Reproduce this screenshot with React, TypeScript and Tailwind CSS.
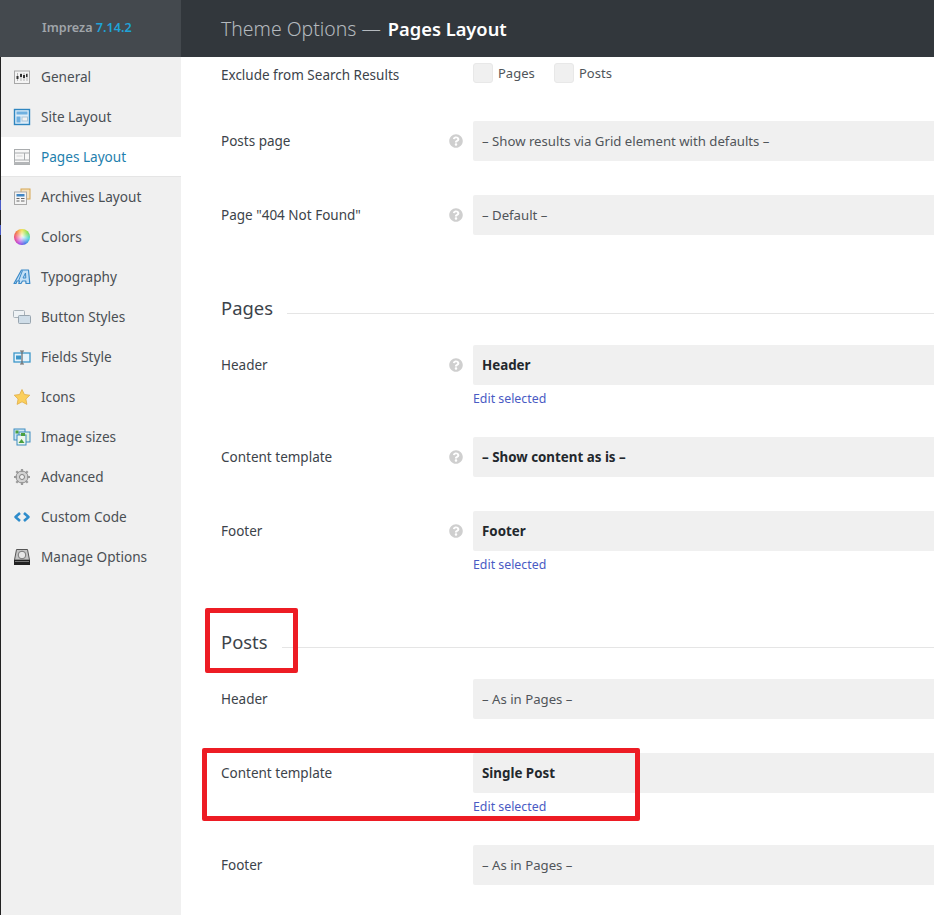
import React from "react";
import { FaQuestionCircle } from "react-icons/fa";

const G = ({ children }: { children: React.ReactNode }) => (
  <svg width="18" height="18" viewBox="0 0 18 18" className="shrink-0">{children}</svg>
);

const icons: Record<string, React.ReactNode> = {
  General: (
    <G>
      <rect x="1.5" y="3" width="15" height="12.500" fill="#f4f4f4" stroke="#a8a8a8" />
      <path d="M4.500 5v8M8 5v8M11 5v8M14 5v8" stroke="#b5b5b5" />
      <path d="M3.500 8h2v3h-2zM7 6h2v3H7zM10 7h2v3h-2zM13 6h1.500v3H13z" fill="#333" />
    </G>
  ),
  "Site Layout": (
    <G>
      <rect x="1.500" y="1.500" width="15" height="15" fill="#dcecf8" stroke="#2f86c0" strokeWidth="1.400" />
      <rect x="3.500" y="3.500" width="11" height="3" fill="#6fb0e0" />
      <rect x="3.500" y="8.500" width="4" height="6" fill="#6fb0e0" />
      <rect x="9" y="9" width="5.500" height="4" fill="#f2f2f2" stroke="#a9c4d8" />
    </G>
  ),
  "Pages Layout": (
    <G>
      <rect x="1.500" y="1.500" width="15" height="15" fill="#f7f7f7" stroke="#a9acae" />
      <path d="M1.500 5h15M11.500 5v7M1.500 12h15" stroke="#a9acae" />
      <path d="M3.500 8h6" stroke="#d4d4d4" />
      <rect x="1" y="14" width="16" height="2.500" fill="#b4b6b8" />
    </G>
  ),
  "Archives Layout": (
    <G>
      <rect x="8" y="1" width="9" height="10" fill="#f4e2bf" stroke="#d6a552" />
      <rect x="1.500" y="4" width="12" height="12.500" fill="#f4f4f4" stroke="#a9a9a9" />
      <rect x="3.500" y="6" width="8" height="2.500" fill="#3f86c4" />
      <path d="M3.500 10.500h3M8 10.500h3.500M3.500 13h3M8 13h3.500" stroke="#666" />
    </G>
  ),
  Typography: (
    <G>
      <path d="M1 15.500L8.500 2H15.500L16.800 15.500H13L12.800 13H9.500L8 15.500H5.800L6.500 13H4L3 15.500z" fill="#c4e0f6" stroke="#3b8ac8" strokeWidth="1.200" strokeLinejoin="round" />
      <path d="M9.500 2.500L5.500 13M12.500 5l-2.500 5h2.800z" fill="none" stroke="#3b8ac8" />
    </G>
  ),
  "Button Styles": (
    <G>
      <rect x="0.500" y="2.500" width="11" height="7" rx="1" fill="#eef2f5" stroke="#a9b2b9" />
      <rect x="5.500" y="7.500" width="12" height="8" rx="1" fill="#cfdde8" stroke="#98a5af" />
    </G>
  ),
  "Fields Style": (
    <G>
      <rect x="1" y="5" width="16" height="9" fill="#e6f3fb" stroke="#3d97c9" strokeWidth="1.300" />
      <rect x="3" y="7.500" width="5" height="4" fill="#3d97c9" />
      <path d="M9 3v13M7 3h4M7 16h4" stroke="#666" strokeWidth="1.200" />
    </G>
  ),
  Icons: (
    <G>
      <path d="M9 1.500l2.400 5 5.400.7-3.900 3.800 1 5.400L9 13.800l-4.900 2.600 1-5.400L1.200 7.200l5.400-.7z" fill="#fbcf5c" stroke="#e0ac45" strokeWidth="0.800" strokeLinejoin="round" />
    </G>
  ),
  "Image sizes": (
    <G>
      <rect x="1" y="1" width="11" height="11" fill="#cfe6f5" stroke="#3d8cc0" />
      <rect x="6" y="4" width="11" height="10" fill="#dff0e0" stroke="#3d8cc0" />
      <rect x="4" y="7" width="9" height="10" fill="#eef7ee" stroke="#3d8cc0" />
      <path d="M5.500 15l3-4 3 4z" fill="#4aa03f" />
      <rect x="2.500" y="2.500" width="3" height="3" fill="#4aa03f" />
      <rect x="8" y="5" width="4" height="3" fill="#4aa03f" />
    </G>
  ),
  Advanced: (
    <G>
      <circle cx="9" cy="9" r="6" fill="#d2d2d2" stroke="#8e8e8e" strokeWidth="1" />
      <path d="M9 1v3M9 14v3M1 9h3M14 9h3M3.300 3.300l2 2M12.700 12.700l2 2M14.700 3.300l-2 2M5.300 12.700l-2 2" stroke="#9a9a9a" strokeWidth="2.200" />
      <circle cx="9" cy="9" r="2.500" fill="#f0f0f0" stroke="#808080" />
    </G>
  ),
  "Custom Code": (
    <G>
      <path d="M7 5L2.500 9 7 13" fill="none" stroke="#2e8ccb" strokeWidth="2.600" strokeLinejoin="round" />
      <path d="M11 5l4.500 4L11 13" fill="none" stroke="#2e8ccb" strokeWidth="2.600" strokeLinejoin="round" />
    </G>
  ),
  "Manage Options": (
    <G>
      <path d="M3.500 1.500h11L16.500 12h-15z" fill="#c4c4c4" stroke="#555" />
      <circle cx="9" cy="7" r="3.800" fill="#e6e6e6" stroke="#777" />
      <rect x="1" y="12" width="16" height="5" fill="#222" />
      <rect x="2" y="13" width="14" height="1" fill="#777" />
    </G>
  ),
};

const menu = [
  "General",
  "Site Layout",
  "Pages Layout",
  "Archives Layout",
  "Colors",
  "Typography",
  "Button Styles",
  "Fields Style",
  "Icons",
  "Image sizes",
  "Advanced",
  "Custom Code",
  "Manage Options",
];

function MenuItem({ name }: { name: string }) {
  const active = name === "Pages Layout";
  return (
    <div
      className={
        active
          ? "flex h-10 items-center gap-[10px] border-b border-[#e5e5e5] bg-white pt-px pl-3 text-[13.6px] text-[#1f7fae]"
          : "flex h-10 items-center gap-[10px] pl-3 text-[13.6px] text-[#4a4f54]"
      }
    >
      {name === "Colors" ? (
        <span className="mx-px h-4 w-4 shrink-0 rounded-full bg-[radial-gradient(circle,#ffffffcc_10%,transparent_70%),conic-gradient(#f2e04a,#7bdc4a,#3fd0d8,#3f6ee8,#b03fe0,#e83f8a,#f0703a,#f2e04a)]" />
      ) : (
        icons[name]
      )}
      <span>{name}</span>
    </div>
  );
}

function Help() {
  return (
    <span className="flex w-[14px] shrink-0 justify-center text-[#cfcfcf]">
      <FaQuestionCircle size={14} />
    </span>
  );
}

function Field({
  label,
  value,
  bold,
  help,
  edit,
}: {
  label: string;
  value: string;
  bold?: boolean;
  help?: boolean;
  edit?: boolean;
}) {
  return (
    <div className="flex">
      <div className="flex h-10 w-[252px] shrink-0 items-center pr-[10px] text-[13.5px] text-[#3c434a]">
        <span className="flex-1">{label}</span>
        {help && <Help />}
      </div>
      <div className="min-w-0 flex-1">
        <div
          className={
            bold
              ? "flex h-10 items-center rounded-l-[2px] bg-[#f0f0f0] pl-[9px] text-[13.35px] font-bold text-[#23282d]"
              : "flex h-10 items-center rounded-l-[2px] bg-[#f0f0f0] pl-[9px] pt-px text-[13.2px] text-[#50555a]"
          }
        >
          {value}
        </div>
        {edit && <div className="h-[18px] text-[12.35px] leading-[28px] text-[#4a5bc4]">Edit selected</div>}
      </div>
    </div>
  );
}

function Heading({ title }: { title: string }) {
  return (
    <div className="h-[110px] pt-[61px]">
      <div className="flex h-6 items-center gap-[14px]">
        <span className="text-[18.4px] leading-6 text-[#3c434a]">{title}</span>
        <span className="mt-[10px] h-px flex-1 bg-[#e5e5e5]" />
      </div>
    </div>
  );
}

export default function App() {
  return (
    <div className="relative flex h-[915px] w-[934px] flex-col overflow-hidden bg-white font-['Noto_Sans','Open_Sans',sans-serif]">
      <header className="flex h-[57px] shrink-0 bg-[#32373c]">
        <div className="flex w-[181px] items-center bg-[#44494e] pb-px pl-[42px] text-[12.6px] font-semibold text-[#a0a5aa]">
          <span>
            Impreza <span className="text-[#1fa3d8]">7.14.2</span>
          </span>
        </div>
        <div className="flex items-center pl-10 text-[19.4px] font-light text-[#b4b9be]">
          Theme Options —&nbsp;<span className="ml-[2px] text-[18.3px] font-semibold text-white">Pages Layout</span>
        </div>
      </header>
      <div className="flex min-h-0 flex-1">
        <aside className="relative w-[181px] shrink-0 border-l border-[#222] bg-[#f0f0f0]">
          {menu.map((m) => (
            <MenuItem key={m} name={m} />
          ))}
          <span className="absolute -left-px top-[143px] h-[10px] w-px bg-[#4a5bc4]" />
          <span className="absolute -left-px top-[168px] h-[10px] w-px bg-[#4a5bc4]" />
        </aside>
        <main className="flex min-w-0 flex-1 flex-col pl-10">
          <div className="flex h-16 shrink-0">
            <div className="w-[252px] shrink-0 pt-2 text-[13.5px] leading-5 text-[#3c434a]">
              Exclude from Search Results
            </div>
            <div className="mt-[6px] flex h-5 items-center text-[13px] text-[#50555a]">
              <span className="h-5 w-5 rounded-[3px] border border-[#e8e8e8] bg-[#f0f0f0]" />
              <span className="ml-[5px] w-[56px] pt-px">Pages</span>
              <span className="h-5 w-5 rounded-[3px] border border-[#e8e8e8] bg-[#f0f0f0]" />
              <span className="ml-[5px] pt-px">Posts</span>
            </div>
          </div>
          <div className="flex flex-col gap-[34px]">
            <Field label="Posts page" value="– Show results via Grid element with defaults –" help />
            <Field label={'Page "404 Not Found"'} value="– Default –" help />
          </div>
          <Heading title="Pages" />
          <div className="flex flex-col gap-[34px]">
            <Field label="Header" value="Header" bold help edit />
            <Field label="Content template" value="– Show content as is –" bold help />
            <Field label="Footer" value="Footer" bold help edit />
          </div>
          <Heading title="Posts" />
          <div className="flex flex-col gap-[34px]">
            <Field label="Header" value="– As in Pages –" />
            <Field label="Content template" value="Single Post" bold edit />
            <Field label="Footer" value="– As in Pages –" />
          </div>
        </main>
      </div>
      <div className="absolute left-[205px] top-[608px] h-[65px] w-[93px] rounded-[2px] border-[5px] border-[#ed1c24]" />
      <div className="absolute left-[202px] top-[748px] h-[73px] w-[438px] rounded-[2px] border-[5px] border-[#ed1c24]" />
    </div>
  );
}
